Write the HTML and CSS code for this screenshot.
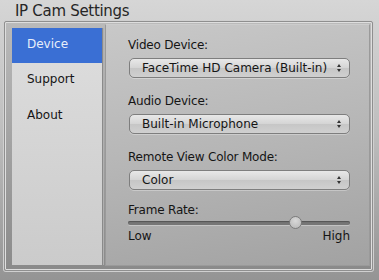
FILE: index.html
```html
<!DOCTYPE html>
<html>
<head>
<meta charset="utf-8">
<link rel="stylesheet" href="styles.css">
</head>
<body>
<div class="window">
  <div class="title">IP Cam Settings</div>
  <div class="frame">
    <div class="sidebar">
      <div class="item selected">Device</div>
      <div class="item">Support</div>
      <div class="item">About</div>
    </div>
    <div class="content">
      <div class="label first">Video Device:</div>
      <div class="popup"><span>FaceTime HD Camera (Built-in)</span><span class="arrows"><i class="up"></i><i class="down"></i></span></div>
      <div class="label">Audio Device:</div>
      <div class="popup"><span>Built-in Microphone</span><span class="arrows"><i class="up"></i><i class="down"></i></span></div>
      <div class="label">Remote View Color Mode:</div>
      <div class="popup"><span>Color</span><span class="arrows"><i class="up"></i><i class="down"></i></span></div>
      <div class="label rate">Frame Rate:</div>
      <div class="slider"><div class="track"></div><div class="thumb" style="left: 75%"></div></div>
      <div class="ends"><span>Low</span><span>High</span></div>
    </div>
  </div>
</div>
</body>
</html>
```
FILE: styles.css
```css
html, body {
  margin: 0;
  padding: 0;
}
body {
  width: 379px;
  height: 280px;
  overflow: hidden;
  font-family: "DejaVu Sans", "Liberation Sans", sans-serif;
  color: #151515;
  background: linear-gradient(180deg, #d6d6d6 0%, #bfbfbf 45%, #949494 100%);
}
.window {
  display: flex;
  flex-direction: column;
  height: 280px;
}
.title {
  height: 21px;
  padding-left: 15px;
  font-size: 15px;
  line-height: 22px;
  color: #262626;
  letter-spacing: -0.3px;
}
.frame {
  margin: 0 6px 0 4px;
  height: 250px;
  box-sizing: border-box;
  border: 1px solid #8f8f8f;
  box-shadow: inset 0 0 0 1px #dedede, 0 0 0 1px #d0d0d0;
  border-radius: 2px;
  background: linear-gradient(180deg, #bababa, #8a8a8a);
  display: flex;
  padding: 2px 2px 4px 7px;
  gap: 2px;
}
.sidebar {
  width: 90px;
  margin-top: 4px;
  margin-bottom: 1px;
  background: linear-gradient(180deg, #dedede, #cbcbcb);
  border-right: 1px solid #8a8a8a;
  box-shadow: 1px 0 0 #b0b0b0;
}
.item {
  height: 36px;
  box-sizing: border-box;
  padding: 9px 0 0 15px;
  font-size: 12px;
  line-height: 15px;
}
.item.selected {
  height: 35px;
  background: #3a6fd4;
  color: #e8eefa;
}
.content {
  flex: 1;
  background: linear-gradient(170deg, #c8c8c8 0%, #b6b6b6 50%, #a2a2a2 100%);
  border: 1px solid #9a9a9a;
  border-top-color: #cccccc;
  padding: 0 19px 0 22px;
}
.label {
  font-size: 12px;
  line-height: 15px;
  margin-top: 16px;
  letter-spacing: -0.2px;
}
.label.first {
  margin-top: 13px;
}
.label.rate {
  margin-top: 13px;
}
.popup {
  margin-top: 5px;
  margin-left: 1px;
  height: 20px;
  box-sizing: border-box;
  border: 1px solid #7e7e7e;
  border-radius: 5px;
  background: linear-gradient(180deg, #e8e8e8 0%, #d4d4d4 50%, #c6c6c6 51%, #d0d0d0 100%);
  box-shadow: 0 1px 0 rgba(255,255,255,0.3);
  display: flex;
  align-items: center;
  justify-content: space-between;
  padding: 0 8px 0 12px;
  font-size: 12px;
  line-height: 18px;
}
.arrows {
  display: flex;
  flex-direction: column;
  gap: 2px;
}
.arrows i {
  display: block;
  width: 0;
  height: 0;
  border-left: 2.5px solid transparent;
  border-right: 2.5px solid transparent;
}
.arrows .up {
  border-bottom: 3px solid #333;
}
.arrows .down {
  border-top: 3px solid #333;
}
.slider {
  position: relative;
  height: 13px;
  margin-top: -2px;
  display: flex;
  align-items: center;
}
.track {
  flex: 1;
  height: 4px;
  border-radius: 2px;
  background: #767676;
  box-shadow: inset 0 1px 1px #555, 0 1px 0 rgba(255,255,255,0.3);
}
.thumb {
  position: absolute;
  top: 0;
  width: 13px;
  height: 13px;
  box-sizing: border-box;
  margin-left: -6px;
  border-radius: 50%;
  border: 1px solid #7c7c7c;
  background: radial-gradient(circle at 50% 35%, #d8d8d8, #b6b6b6);
}
.ends {
  display: flex;
  justify-content: space-between;
  font-size: 12px;
  line-height: 15px;
}
```
